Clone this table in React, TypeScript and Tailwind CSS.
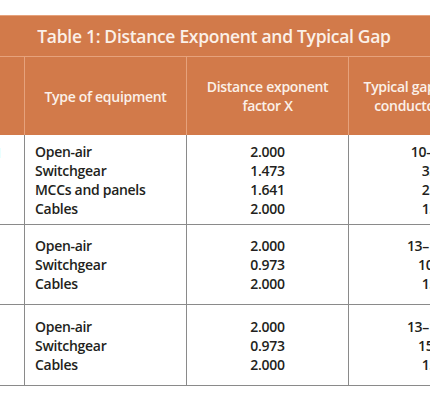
import React from "react";

const groups = [
  {
    h: "h-[90px]",
    v: "0.208–1",
    rows: [
      ["Open-air", "2.000", "10–40"],
      ["Switchgear", "1.473", "32"],
      ["MCCs and panels", "1.641", "25"],
      ["Cables", "2.000", "13"],
    ],
  },
  {
    h: "h-[80px]",
    v: "",
    rows: [
      ["Open-air", "2.000", "13–102"],
      ["Switchgear", "0.973", "102"],
      ["Cables", "2.000", "13"],
    ],
  },
  {
    h: "h-[81px]",
    v: "",
    rows: [
      ["Open-air", "2.000", "13–153"],
      ["Switchgear", "0.973", "153"],
      ["Cables", "2.000", "13"],
    ],
  },
];

export default function App() {
  return (
    <div
      className="w-[430px] h-[400px] overflow-hidden bg-white relative"
      style={{ fontFamily: '"Open Sans", "Liberation Sans", sans-serif' }}
    >
      <div className="pt-[15px] ml-[-82px] w-[592px]">
        <div className="h-[42px] bg-[#d27a4a] border-t border-b border-[#e6a27c] flex items-center justify-center">
          <span className="text-[17.5px] font-semibold text-[#fbf0e8] tracking-[-0.3px]">
            Table 1: Distance Exponent and Typical Gap
          </span>
        </div>
        <div className="grid grid-cols-[106px_162px_162px_162px] h-[78px] bg-[#d27a4a] text-[#fbf0e8] text-[14px] font-semibold leading-[19px] tracking-[-0.3px]">
          <div></div>
          <div className="border-l border-[#e6a27c] flex items-center justify-center text-center">
            Type of equipment
          </div>
          <div className="border-l border-[#e6a27c] flex items-center justify-center text-center">
            Distance exponent
            <br />
            factor X
          </div>
          <div className="border-l border-[#e6a27c] flex items-center justify-center text-center">
            Typical gap between
            <br />
            conductors (mm)
          </div>
        </div>
        {groups.map((g, gi) => (
          <div
            key={gi}
            className={`grid grid-cols-[106px_162px_162px_162px] ${g.h} border-b border-[#8a8a8a] text-[#231f20] text-[14px] font-semibold leading-[19px] tracking-[-0.3px]`}
          >
            <div className="flex flex-col justify-start pt-[8px] items-end pr-[22px]">
              {g.v}
            </div>
            <div className="border-l border-[#8a8a8a] flex flex-col justify-center pl-[10px]">
              {g.rows.map((r, i) => (
                <div key={i}>{r[0]}</div>
              ))}
            </div>
            <div className="border-l border-[#8a8a8a] flex flex-col justify-center items-center">
              {g.rows.map((r, i) => (
                <div key={i}>{r[1]}</div>
              ))}
            </div>
            <div className="border-l border-[#8a8a8a] flex flex-col justify-center items-center">
              {g.rows.map((r, i) => (
                <div key={i}>{r[2]}</div>
              ))}
            </div>
          </div>
        ))}
      </div>
    </div>
  );
}
